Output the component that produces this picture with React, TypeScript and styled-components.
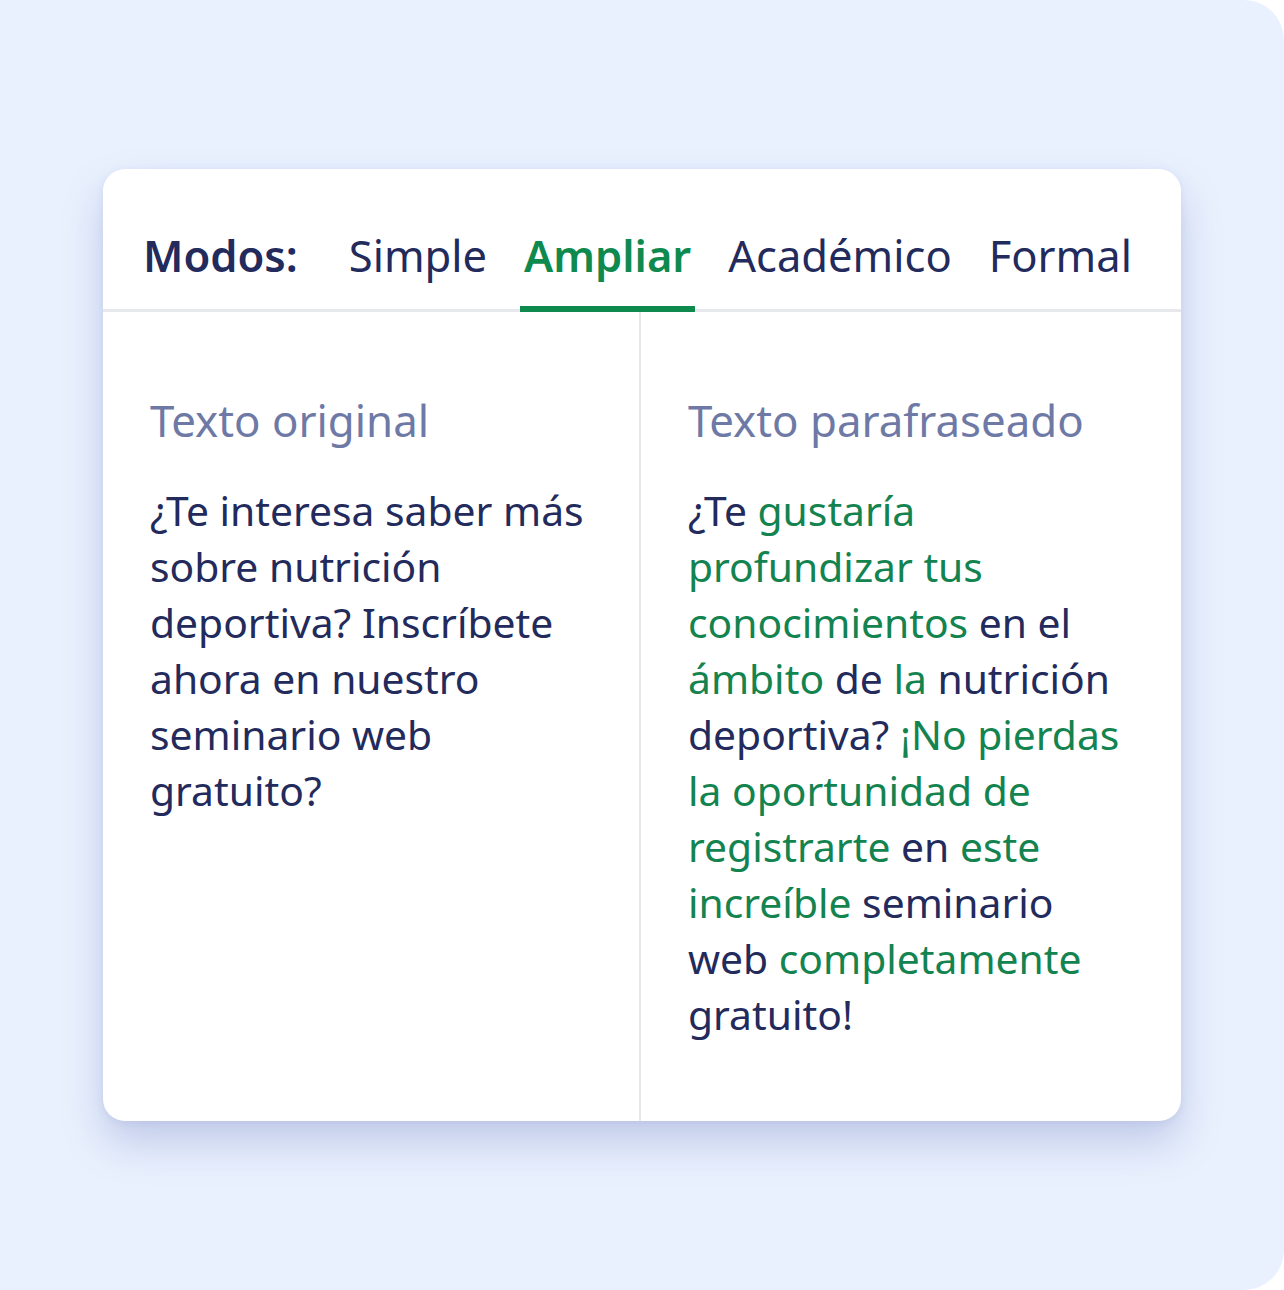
import React, { FC } from 'react';
import styled, { createGlobalStyle } from 'styled-components';

const GlobalStyle = createGlobalStyle`
  html, body {
    margin: 0;
    padding: 0;
    background: #ffffff;
  }
  body {
    font-family: 'Noto Sans', 'Open Sans', sans-serif;
  }
`;

const navy = '#232a5c';
const green = '#0f8a4f';

const Page = styled.div`
  width: 1284px;
  height: 1290px;
  background-color: #e9f1fe;
  border-radius: 0 40px 40px 0;
  display: flex;
  justify-content: center;
  align-items: center;
`;

const Card = styled.div`
  width: 1078px;
  background-color: #ffffff;
  border-radius: 22px;
  box-shadow: 0 22px 40px rgba(92, 104, 178, 0.28), 0 2px 8px rgba(92, 104, 178, 0.1);
  overflow: hidden;
`;

const ModeBar = styled.div`
  display: flex;
  align-items: flex-end;
  gap: 29px;
  padding: 58px 40px 0;
  border-bottom: 3px solid #e7e8ec;
`;

const ModeLabel = styled.span`
  font-size: 43.5px;
  line-height: 56px;
  font-weight: 600;
  color: ${navy};
  padding-bottom: 26px;
  margin-right: 18px;
`;

const ModeTab = styled.span<{ $active?: boolean }>`
  font-size: 43.5px;
  line-height: 56px;
  font-weight: ${(p) => (p.$active ? 600 : 400)};
  color: ${(p) => (p.$active ? green : navy)};
  padding: 0 4px 23px;
  border-bottom: 6px solid ${(p) => (p.$active ? green : 'transparent')};
  margin-bottom: -3px;
`;

const Columns = styled.div`
  display: grid;
  grid-template-columns: 536px 1fr;
`;

const Column = styled.div<{ $divided?: boolean }>`
  padding: 80px 50px 79px 47px;
  border-left: ${(p) => (p.$divided ? '2px solid #e7e8ec' : 'none')};
`;

const ColumnTitle = styled.div`
  font-size: 43.8px;
  line-height: 56px;
  color: #6e79a6;
  margin-bottom: 34px;
`;

const Paragraph = styled.p`
  margin: 0;
  font-size: 40.8px;
  line-height: 56px;
  color: ${navy};
`;

const Changed = styled.span`
  color: #138350;
`;

const modes = ['Simple', 'Ampliar', 'Académico', 'Formal'];

// [text, changed]
const rewritten: [string, boolean][] = [
  ['¿Te ', false],
  ['gustaría profundizar tus conocimientos', true],
  [' en el ', false],
  ['ámbito', true],
  [' de ', false],
  ['la', true],
  [' nutrición deportiva? ', false],
  ['¡No pierdas la oportunidad de registrarte', true],
  [' en ', false],
  ['este increíble', true],
  [' seminario web ', false],
  ['completamente', true],
  [' gratuito!', false],
];

const App: FC = () => {
  return (
    <>
      <GlobalStyle />
      <Page>
        <Card>
          <ModeBar>
            <ModeLabel>Modos:</ModeLabel>
            {modes.map((m) => (
              <ModeTab key={m} $active={m === 'Ampliar'}>
                {m}
              </ModeTab>
            ))}
          </ModeBar>
          <Columns>
            <Column>
              <ColumnTitle>Texto original</ColumnTitle>
              <Paragraph>
                ¿Te interesa saber más sobre nutrición deportiva? Inscríbete ahora en nuestro seminario web gratuito?
              </Paragraph>
            </Column>
            <Column $divided>
              <ColumnTitle>Texto parafraseado</ColumnTitle>
              <Paragraph>
                {rewritten.map(([t, c], i) => (c ? <Changed key={i}>{t}</Changed> : <React.Fragment key={i}>{t}</React.Fragment>))}
              </Paragraph>
            </Column>
          </Columns>
        </Card>
      </Page>
    </>
  );
};

export default App;
